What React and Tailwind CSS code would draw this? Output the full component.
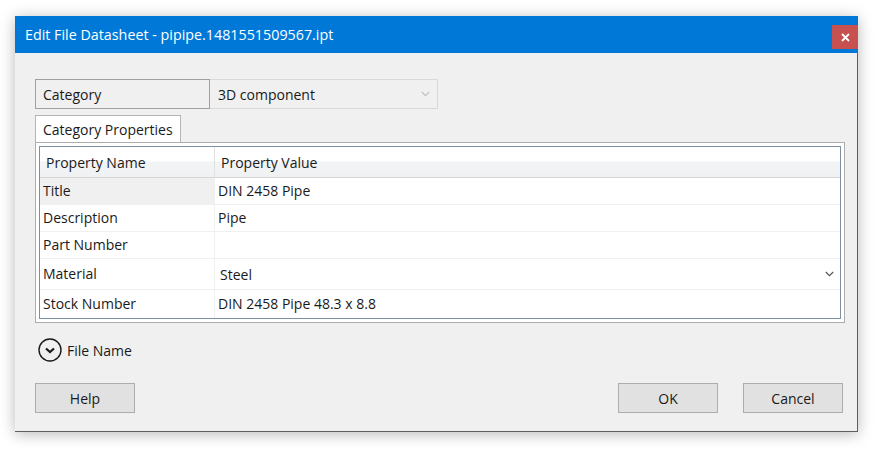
import React from 'react';

const FONT = { fontFamily: '"Open Sans", "Noto Sans", sans-serif' };

function Chevron({ className = '', color = '#6b6b6b' }) {
  return (
    <svg width="9" height="6" viewBox="0 0 9 6" className={className}>
      <path d="M0.8 1 L4.5 4.6 L8.2 1" fill="none" stroke={color} strokeWidth="1.3" />
    </svg>
  );
}

const rows = [
  { name: 'Title', value: 'DIN 2458 Pipe', h: 'h-[27px]', selected: true },
  { name: 'Description', value: 'Pipe', h: 'h-[27px]' },
  { name: 'Part Number', value: '', h: 'h-[27px]' },
  { name: 'Material', value: 'Steel', h: 'h-[31px]', dropdown: true },
  { name: 'Stock Number', value: 'DIN 2458 Pipe 48.3 x 8.8', h: 'h-[28px]', last: true },
];

function Button({ children }) {
  return (
    <button className="w-[100px] h-[30px] bg-[#e1e1e1] border border-[#adadad] text-[14px] text-[#1a1a1a]">
      {children}
    </button>
  );
}

export default function App() {
  return (
    <div className="w-[881px] h-[454px] bg-white pl-[15px] pt-[16px]" style={FONT}>
      <div className="w-[843px] h-[416px] flex flex-col bg-[#f0f0f0] border-r border-b border-[#5f5f5f] shadow-[0_2px_14px_rgba(0,0,0,0.28)]">
        {/* Title bar */}
        <div className="h-[37px] shrink-0 bg-[#0078d7] flex items-start justify-between pl-[10px]">
          <span className="text-white text-[14.3px] leading-[37px]">Edit File Datasheet - pipipe.1481551509567.ipt</span>
          <button className="mt-[9px] -mr-px w-[26px] h-[24px] bg-[#c75050] flex items-center justify-center">
            <svg width="9" height="9" viewBox="0 0 9 9">
              <path d="M1 1 L8 8 M8 1 L1 8" stroke="#fff" strokeWidth="1.8" />
            </svg>
          </button>
        </div>

        {/* Body */}
        <div className="flex-1 flex flex-col pl-[20px] pr-[14px] pt-[26px] text-[14px] text-[#1a1a1a]">
          {/* Category row */}
          <div className="flex h-[30px]">
            <div className="w-[175px] border border-[#a0a0a0] flex items-center pl-[7px]">Category</div>
            <div className="w-[228px] border border-l-0 border-[#d9d9d9] flex items-center justify-between pl-[8px] pr-[7px]">
              <span>3D component</span>
              <Chevron color="#c2c2c2" />
            </div>
          </div>

          {/* Tab */}
          <div className="mt-[6px] w-[146px] h-[27px] bg-white border border-b-0 border-[#b4b4b4] flex items-center pl-[7px]">
            Category Properties
          </div>

          {/* Panel */}
          <div className="w-[810px] border border-[#adadad] p-[3px] bg-white">
            <div className="border border-[#7c8fa3] flex flex-col">
              {/* Header */}
              <div className="h-[31px] flex border-b border-[#d5d5d5] bg-[linear-gradient(#ffffff_0%,#ffffff_45%,#f3f4f6_50%,#eff1f3_100%)]">
                <div className="w-[175px] flex items-center pl-[6px] border-r border-[#e2e2e2]">Property Name</div>
                <div className="flex-1 flex items-center pl-[6px]">Property Value</div>
              </div>
              {rows.map((r) => (
                <div key={r.name} className={`${r.h} flex ${r.last ? '' : 'border-b border-[#f0f0f0]'}`}>
                  <div className={`w-[175px] flex items-center pl-[3px] border-r border-[#f0f0f0] ${r.selected ? 'bg-[#f0f0f0]' : 'bg-white'}`}>
                    <span className="-mt-[1px]">{r.name}</span>
                  </div>
                  {r.dropdown ? (
                    <div className="flex-1 flex items-center justify-between pl-[5px] pr-[6px]">
                      <span className="mt-[1px]">{r.value}</span>
                      <Chevron color="#5a5a5a" />
                    </div>
                  ) : (
                    <div className="flex-1 flex items-center pl-[3px]">
                      <span className="-mt-[1px]">{r.value}</span>
                    </div>
                  )}
                </div>
              ))}
            </div>
          </div>

          {/* File Name expander */}
          <div className="mt-[15px] h-[24px] flex items-center gap-[5px] pl-[3px]">
            <svg width="24" height="24" viewBox="0 0 24 24">
              <circle cx="12" cy="12" r="11" fill="none" stroke="#1a1a1a" strokeWidth="1.4" />
              <path d="M8 10.5 L12 14 L16 10.5" fill="none" stroke="#1a1a1a" strokeWidth="2.2" />
            </svg>
            <span>File Name</span>
          </div>

          {/* Buttons */}
          <div className="mt-[21px] flex justify-between">
            <Button>Help</Button>
            <div className="flex gap-[25px]">
              <Button>OK</Button>
              <Button>Cancel</Button>
            </div>
          </div>
        </div>
      </div>
    </div>
  );
}
